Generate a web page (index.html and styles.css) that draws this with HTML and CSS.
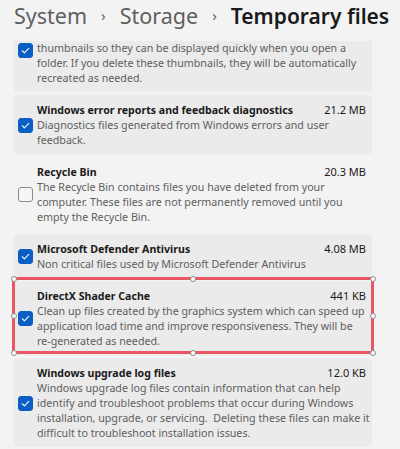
FILE: index.html
```html
<!DOCTYPE html>
<html lang="en">
<head>
<meta charset="utf-8">
<title>Temporary files</title>
<link rel="stylesheet" href="styles.css">
</head>
<body>
<div class="page">
  <header class="crumbs">
    <span class="crumb">System</span>
    <span class="chev">›</span>
    <span class="crumb">Storage</span>
    <span class="chev">›</span>
    <span class="crumb current">Temporary files</span>
  </header>

  <main class="list">
    <section class="card card-clipped">
      <span class="check on top"><svg viewBox="0 0 16 16"><path d="M4 8.3l2.6 2.6L12 5.4"/></svg></span>
      <div class="body">
        <p class="desc">thumbnails so they can be displayed quickly when you open a<br>folder. If you delete these thumbnails, they will be automatically<br>recreated as needed.</p>
      </div>
    </section>

    <section class="card">
      <span class="check on"><svg viewBox="0 0 16 16"><path d="M4 8.3l2.6 2.6L12 5.4"/></svg></span>
      <div class="body">
        <div class="row"><span class="title">Windows error reports and feedback diagnostics</span><span class="size">21.2 MB</span></div>
        <p class="desc">Diagnostics files generated from Windows errors and user<br>feedback.</p>
      </div>
    </section>

    <section class="card plain">
      <span class="check"></span>
      <div class="body">
        <div class="row"><span class="title">Recycle Bin</span><span class="size">20.3 MB</span></div>
        <p class="desc">The Recycle Bin contains files you have deleted from your<br>computer. These files are not permanently removed until you<br>empty the Recycle Bin.</p>
      </div>
    </section>

    <section class="card">
      <span class="check on"><svg viewBox="0 0 16 16"><path d="M4 8.3l2.6 2.6L12 5.4"/></svg></span>
      <div class="body">
        <div class="row"><span class="title">Microsoft Defender Antivirus</span><span class="size">4.08 MB</span></div>
        <p class="desc">Non critical files used by Microsoft Defender Antivirus</p>
      </div>
    </section>

    <section class="card selected">
      <span class="check on"><svg viewBox="0 0 16 16"><path d="M4 8.3l2.6 2.6L12 5.4"/></svg></span>
      <div class="body">
        <div class="row"><span class="title">DirectX Shader Cache</span><span class="size">441 KB</span></div>
        <p class="desc">Clean up files created by the graphics system which can speed up<br>application load time and improve responsiveness. They will be<br>re-generated as needed.</p>
      </div>
      <div class="selection">
        <i class="handle h-tl"></i><i class="handle h-tm"></i><i class="handle h-tr"></i>
        <i class="handle h-ml"></i><i class="handle h-mr"></i>
        <i class="handle h-bl"></i><i class="handle h-bm"></i><i class="handle h-br"></i>
      </div>
    </section>

    <section class="card">
      <span class="check on"><svg viewBox="0 0 16 16"><path d="M4 8.3l2.6 2.6L12 5.4"/></svg></span>
      <div class="body">
        <div class="row"><span class="title">Windows upgrade log files</span><span class="size">12.0 KB</span></div>
        <p class="desc">Windows upgrade log files contain information that can help<br>identify and troubleshoot problems that occur during Windows<br>installation, upgrade, or servicing.&nbsp; Deleting these files can make it<br>difficult to troubleshoot installation issues.</p>
      </div>
    </section>
  </main>
</div>
</body>
</html>
```

FILE: styles.css
```css
html, body {
  margin: 0;
  padding: 0;
  background: #f3f3f3;
}
body {
  width: 400px;
  height: 449px;
  overflow: hidden;
  font-family: "Noto Sans", "Open Sans", sans-serif;
  color: #1b1b1b;
}
.page {
  display: flex;
  flex-direction: column;
}
.crumbs {
  height: 41px;
  box-sizing: border-box;
  padding: 0 0 0 14px;
  display: flex;
  align-items: flex-start;
  font-size: 21.5px;
  line-height: 32px;
  white-space: nowrap;
}
.crumb {
  color: #5f5f5f;
}
.crumb.current {
  color: #1a1a1a;
  font-weight: 600;
  font-size: 21px;
}
.chev {
  color: #5f5f5f;
  font-size: 15px;
  margin: 0 14px;
  line-height: 30px;
}
.list {
  display: flex;
  flex-direction: column;
  gap: 3px;
  padding: 0 28px 0 14px;
}
.card {
  position: relative;
  display: flex;
  align-items: center;
  background: #ebebeb;
  border-radius: 4px;
  padding: 7px 6px 6px 4px;
}
.card.plain {
  background: transparent;
}
.card.card-clipped {
  padding-top: 0;
  border-radius: 0 0 4px 4px;
  align-items: flex-start;
}
.check {
  flex: none;
  width: 15px;
  height: 15px;
  box-sizing: border-box;
  border: 1px solid #8b8b8b;
  border-radius: 3px;
  background: #f6f6f6;
  margin-right: 4px;
  display: flex;
  align-items: center;
  justify-content: center;
}
.check.on {
  background: #0b5ec4;
  border-color: #0b5ec4;
}
.check.top {
  margin-top: 2px;
}
.check svg {
  width: 13px;
  height: 13px;
  fill: none;
  stroke: #ffffff;
  stroke-width: 1.3;
  stroke-linecap: round;
  stroke-linejoin: round;
}
.body {
  flex: 1;
  min-width: 0;
}
.row {
  display: flex;
  justify-content: space-between;
  align-items: center;
  height: 16px;
  line-height: 16px;
}
.title {
  font-size: 10.6px;
  font-weight: 700;
  color: #1a1a1a;
  white-space: nowrap;
}
.size {
  font-size: 11px;
  color: #1a1a1a;
  white-space: nowrap;
}
.desc {
  margin: 0;
  font-size: 10.7px;
  line-height: 15px;
  color: #5e5e5e;
  white-space: nowrap;
}
.selection {
  position: absolute;
  top: -4px;
  left: -2px;
  right: -2px;
  bottom: 1px;
  border: 3px solid #ea5661;
  pointer-events: none;
}
.handle {
  position: absolute;
  width: 6px;
  height: 6px;
  box-sizing: border-box;
  border-radius: 50%;
  background: #ffffff;
  border: 1px solid #8c8c8c;
}
.h-tl { top: -4.5px; left: -4.5px; }
.h-tm { top: -4.5px; left: calc(50% - 3px); }
.h-tr { top: -4.5px; right: -4.5px; }
.h-ml { top: calc(50% - 3px); left: -4.5px; }
.h-mr { top: calc(50% - 3px); right: -4.5px; }
.h-bl { bottom: -4.5px; left: -4.5px; }
.h-bm { bottom: -4.5px; left: calc(50% - 3px); }
.h-br { bottom: -4.5px; right: -4.5px; }
```
